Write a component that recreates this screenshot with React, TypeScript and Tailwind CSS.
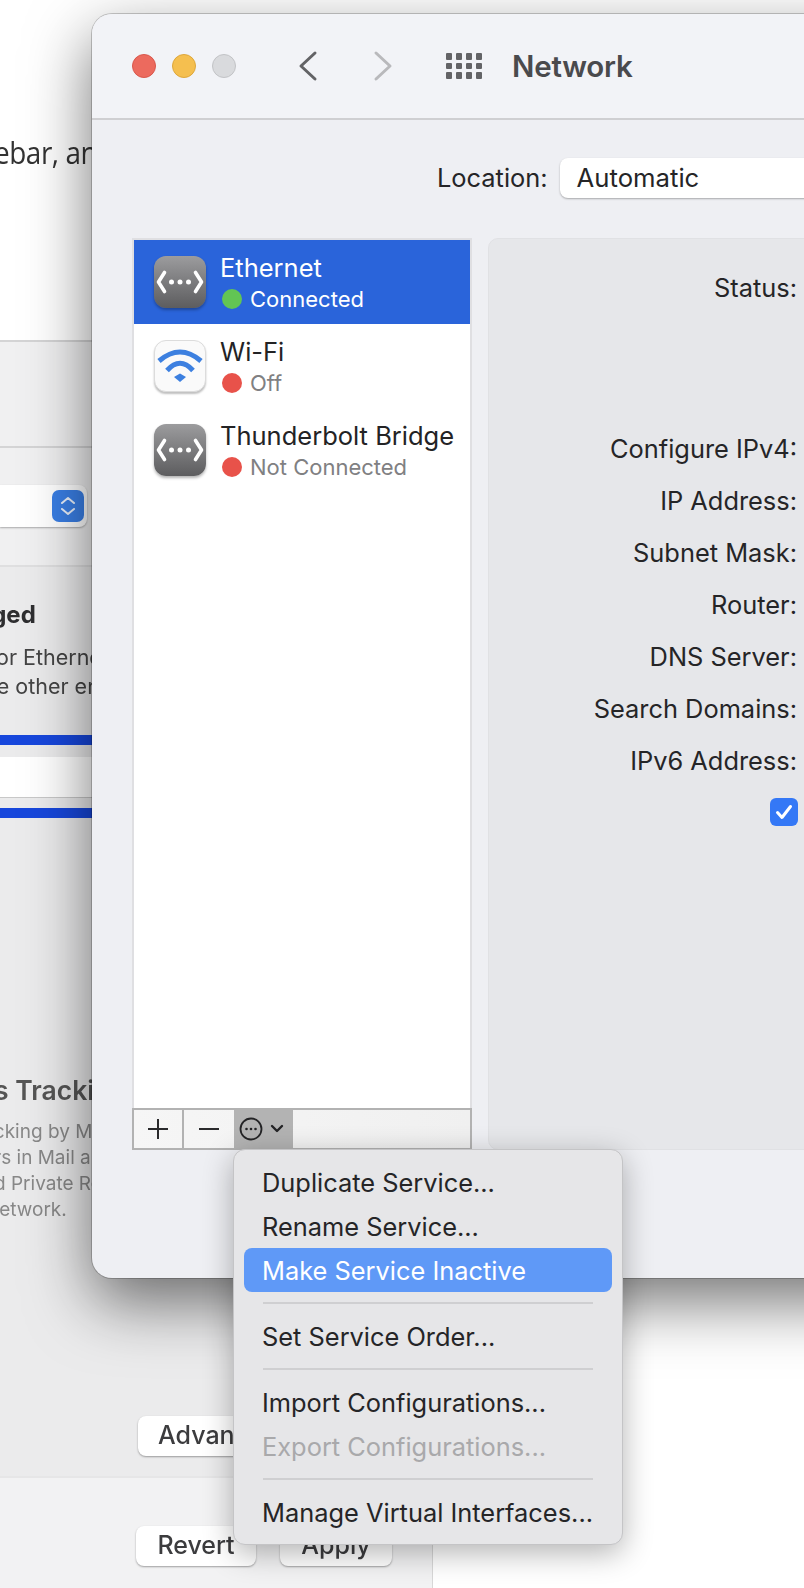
import React from "react";

const EthernetIcon = () => (
  <div className="w-[52px] h-[52px] shrink-0 rounded-[12px] bg-linear-to-b from-[#9c9c9e] to-[#5d5d5f] shadow-[0_2px_3px_rgba(0,0,0,0.3)]">
    <svg width="52" height="52" viewBox="0 0 52 52" fill="none">
      <path d="M10.5 16.5 L4.5 26 L10.5 35.5 M41.5 16.5 L47.5 26 L41.5 35.5" stroke="#fff" strokeWidth="3.6" strokeLinecap="round" strokeLinejoin="round" />
      <circle cx="17.5" cy="26" r="2.5" fill="#fff" />
      <circle cx="26" cy="26" r="2.5" fill="#fff" />
      <circle cx="34.5" cy="26" r="2.5" fill="#fff" />
    </svg>
  </div>
);

const WifiIcon = () => (
  <div className="w-[52px] h-[52px] shrink-0 rounded-[12px] bg-[#fafafa] border border-[#dcdcdc] shadow-[0_2px_2px_rgba(0,0,0,0.25)]">
    <svg width="50" height="50" viewBox="1 1 50 50" fill="none">
      <path d="M5 21 Q26 3 47 21" stroke="#3d80e0" strokeWidth="5" />
      <path d="M13 30.5 Q26 16 39 30.5" stroke="#3d80e0" strokeWidth="5" />
      <path d="M20 37 L26 33.5 L32 37 L26 42 Z" fill="#3d80e0" />
    </svg>
  </div>
);

const services = [
  { name: "Ethernet", status: "Connected", dot: "bg-[#62c554]", active: true, icon: <EthernetIcon /> },
  { name: "Wi-Fi", status: "Off", dot: "bg-[#e8524a]", active: false, icon: <WifiIcon /> },
  { name: "Thunderbolt Bridge", status: "Not Connected", dot: "bg-[#e8524a]", active: false, icon: <EthernetIcon /> },
];

const ServiceRow = ({ name, status, dot, active, icon }: (typeof services)[number]) => (
  <div className={`h-[84px] flex items-center pl-[20px] ${active ? "bg-[#2a64da]" : "bg-white"}`}>
    {icon}
    <div className="ml-[14px] flex flex-col">
      <div className={`h-[30px] mt-[4px] leading-[30px] text-[25.5px] whitespace-nowrap ${active ? "text-white" : "text-[#232325]"}`}>{name}</div>
      <div className="h-[32px] flex items-center">
        <span className={`ml-[2px] w-[20px] h-[20px] rounded-full ${dot}`} />
        <span className={`ml-[8px] text-[22px] leading-[30px] whitespace-nowrap ${active ? "text-white" : "text-[#808082]"}`}>{status}</span>
      </div>
    </div>
  </div>
);

const labels = ["Configure IPv4:", "IP Address:", "Subnet Mask:", "Router:", "DNS Server:", "Search Domains:", "IPv6 Address:"];

const MenuItem = ({ label, active, disabled }: { label: string; active?: boolean; disabled?: boolean }) => (
  <div
    className={`h-[44px] mx-[10px] pl-[18px] pt-[2px] flex items-center rounded-[8px] text-[25.4px] whitespace-nowrap ${
      active ? "bg-[#5f99f7] text-white" : disabled ? "text-[#a9a9ab]" : "text-[#252527]"
    }`}
  >
    {label}
  </div>
);

const MenuSep = () => <div className="h-[2px] mx-[29px] my-[10px] bg-[#cfcfd1]" />;

const BackButton = ({ label, className }: { label: string; className: string }) => (
  <div className={`h-[40px] rounded-[8px] bg-white shadow-[0_1px_2px_rgba(0,0,0,0.35)] flex items-center justify-center text-[25px] font-medium text-[#3c3c3e] ${className}`}>
    {label}
  </div>
);

export default function App() {
  return (
    <div className="relative w-[804px] h-[1588px] overflow-hidden bg-white flex flex-col font-['Inter','Liberation_Sans',sans-serif]">
      {/* desktop behind: blurred system preferences window */}
      <div className="h-[340px] shrink-0 overflow-hidden blur-[0.5px]">
        <div className="mt-[132px] -ml-[6px] text-[31px] leading-[40px] text-[#333] whitespace-nowrap font-['Open_Sans',sans-serif] tracking-[-0.5px] scale-x-[0.9] origin-left">
          ebar, and
        </div>
      </div>
      <div className="flex-1 w-[433px] flex flex-col bg-[#efeff0] border-r border-[#d8d8d8] border-t-2 border-t-[#d4d4d5] overflow-hidden">
        <div className="h-[106px] shrink-0 border-b-2 border-[#d4d4d5] bg-[#f0f0f1]" />
        <div className="h-[119px] shrink-0 border-b-2 border-[#dfdfe0] bg-[#f0f0f1] pt-[37px]">
          <div className="w-[87px] h-[42px] rounded-r-[8px] bg-white shadow-[0_1px_2px_rgba(0,0,0,0.3)] flex items-center justify-end pr-[3px] blur-[0.4px]">
            <div className="w-[32px] h-[32px] rounded-[7px] bg-[#3a7fe6] flex items-center justify-center">
              <svg width="18" height="24" viewBox="0 0 18 24" fill="none">
                <path d="M3 9 L9 4 L15 9 M3 15 L9 20 L15 15" stroke="#fff" strokeWidth="2" strokeLinecap="round" strokeLinejoin="round" opacity="0.9" />
              </svg>
            </div>
          </div>
        </div>
        <div className="h-[911px] shrink-0 flex flex-col border-b-2 border-[#e6e6e7] bg-[#ebebec] overflow-hidden blur-[0.6px]">
          <div className="mt-[32px] -ml-[74px] h-[32px] leading-[32px] text-[24px] font-bold text-[#2e2e30] whitespace-nowrap">Managed</div>
          <div className="mt-[12px] -ml-[4px] h-[29px] leading-[29px] text-[21.5px] text-[#444] whitespace-nowrap">or Ethernet connections and</div>
          <div className="-ml-[16px] h-[29px] leading-[29px] text-[21.5px] text-[#444] whitespace-nowrap">ne other end of the cable</div>
          <div className="mt-[34px] h-[10px] bg-[#1747dc]" />
          <div className="mt-[12px] h-[41px] bg-white border-b border-[#c8c8c8]" />
          <div className="mt-[10px] h-[10px] bg-[#1747dc]" />
          <div className="mt-[257px] -ml-[6px] h-[30px] leading-[30px] text-[26.5px] font-semibold text-[#555] whitespace-nowrap">s Tracking</div>
          <div className="mt-[14px] -ml-[24px] h-[26px] leading-[26px] text-[19px] text-[#888] whitespace-nowrap">racking by Mail</div>
          <div className="-ml-[6px] h-[26px] leading-[26px] text-[19px] text-[#888] whitespace-nowrap">rs in Mail and</div>
          <div className="-ml-[6px] h-[26px] leading-[26px] text-[19px] text-[#888] whitespace-nowrap">d Private Relay</div>
          <div className="-ml-[12px] h-[26px] leading-[26px] text-[19px] text-[#888] whitespace-nowrap">network.</div>
          <div className="mt-[193px] ml-[138px]">
            <BackButton label="Advanced..." className="w-[184px]" />
          </div>
        </div>
        <div className="flex-1 bg-[#f2f2f3] pt-[48px] pl-[136px] flex gap-[24px] blur-[0.6px]">
          <BackButton label="Revert" className="w-[120px]" />
          <BackButton label="Apply" className="w-[112px]" />
        </div>
      </div>

      {/* Network preferences window */}
      <div className="absolute left-[92px] top-[14px] w-[900px] h-[1264px] rounded-[20px] bg-[#eeeff3] shadow-[0_0_0_1px_rgba(0,0,0,0.2),0_24px_64px_rgba(0,0,0,0.55)] overflow-hidden flex flex-col">
        <div className="h-[106px] shrink-0 bg-[#f2f3f7] border-b-2 border-[#cfcfd2] flex items-center pl-[40px]">
          <span className="w-[24px] h-[24px] rounded-full bg-[#ec6a5e] border border-[#d9574c]" />
          <span className="ml-[16px] w-[24px] h-[24px] rounded-full bg-[#f5bf4f] border border-[#dea73b]" />
          <span className="ml-[16px] w-[24px] h-[24px] rounded-full bg-[#d9dadd] border border-[#c2c3c6]" />
          <svg className="ml-[62px]" width="20" height="32" viewBox="0 0 20 32" fill="none">
            <path d="M17 3 L3 16 L17 29" stroke="#636366" strokeWidth="3" strokeLinecap="round" strokeLinejoin="round" />
          </svg>
          <svg className="ml-[55px]" width="20" height="32" viewBox="0 0 20 32" fill="none">
            <path d="M3 3 L17 16 L3 29" stroke="#b9b9bc" strokeWidth="3" strokeLinecap="round" strokeLinejoin="round" />
          </svg>
          <div className="ml-[53px] w-[36px] grid grid-cols-4 gap-x-[4px] gap-y-[3px]">
            {Array.from({ length: 12 }).map((_, i) => (
              <span key={i} className="w-[6px] h-[6.5px] rounded-[1px] bg-[#636366]" />
            ))}
          </div>
          <span className="ml-[30px] text-[29.5px] font-semibold text-[#4a4a4d] tracking-[-0.2px]">Network</span>
        </div>
        <div className="mt-[38px] h-[40px] shrink-0 flex items-center pl-[345px]">
          <span className="text-[25.4px] text-[#252527] whitespace-nowrap">Location:</span>
          <div className="ml-[12px] w-[400px] h-[40px] rounded-[8px] bg-white shadow-[0_1px_2px_rgba(0,0,0,0.3)] pl-[17px] flex items-center text-[25.7px] text-[#252527]">
            Automatic
          </div>
        </div>
        <div className="mt-[40px] flex pl-[40px]">
          <div className="w-[340px] h-[912px] flex flex-col border-2 border-b-0 border-[#dfdfe2] bg-white">
            {services.map((s) => (
              <ServiceRow key={s.name} {...s} />
            ))}
            <div className="flex-1" />
            <div className="-mx-[2px] h-[42px] flex border-2 border-[#b2b2b2] bg-linear-to-r from-[#f6f6f6] to-[#f0f0f0]">
              <div className="w-[50px] flex items-center justify-center border-r-2 border-[#b2b2b2]">
                <svg width="22" height="22" viewBox="0 0 22 22" fill="none">
                  <path d="M11 1 V21 M1 11 H21" stroke="#2a2a2c" strokeWidth="2" />
                </svg>
              </div>
              <div className="w-[50px] flex items-center justify-center">
                <svg width="22" height="22" viewBox="0 0 22 22" fill="none">
                  <path d="M1 11 H21" stroke="#2a2a2c" strokeWidth="2" />
                </svg>
              </div>
              <div className="w-[59px] bg-[#b3b3b3] flex items-center pl-[5px] gap-[7px]">
                <svg width="24" height="24" viewBox="0 0 24 24" fill="none">
                  <circle cx="12" cy="12" r="10.5" stroke="#242426" strokeWidth="1.8" />
                  <circle cx="7.5" cy="12" r="1.3" fill="#242426" />
                  <circle cx="12" cy="12" r="1.3" fill="#242426" />
                  <circle cx="16.5" cy="12" r="1.3" fill="#242426" />
                </svg>
                <svg width="14" height="10" viewBox="0 0 14 10" fill="none">
                  <path d="M2 2 L7 7 L12 2" stroke="#242426" strokeWidth="2.4" strokeLinecap="round" strokeLinejoin="round" />
                </svg>
              </div>
            </div>
          </div>
          <div className="ml-[16px] w-[400px] h-[912px] rounded-[10px] bg-[#e6e7ea] border border-[#e0e1e4] flex flex-col">
            <div className="mt-[23px] w-[308px] h-[52px] flex items-center justify-end text-[25.4px] text-[#252527]">Status:</div>
            <div className="mt-[109px] flex flex-col">
              {labels.map((label) => (
                <div key={label} className="w-[308px] h-[52px] flex items-center justify-end text-[25.4px] text-[#252527] whitespace-nowrap">
                  {label}
                </div>
              ))}
              <div className="-mt-[1px] w-[309px] h-[52px] flex items-center justify-end">
                <div className="w-[28px] h-[28px] rounded-[6px] bg-[#3478f6] flex items-center justify-center">
                  <svg width="20" height="20" viewBox="0 0 20 20" fill="none">
                    <path d="M3.5 10.5 L8 15.5 L16.5 4.5" stroke="#fff" strokeWidth="3" strokeLinecap="round" strokeLinejoin="round" />
                  </svg>
                </div>
              </div>
            </div>
          </div>
        </div>
      </div>

      {/* action menu */}
      <div className="absolute left-[233px] top-[1149px] w-[390px] h-[396px] pt-[10px] rounded-[12px] bg-[#e6e6e8] border border-[#c4c4c6] shadow-[0_8px_30px_rgba(0,0,0,0.3)] flex flex-col">
        <MenuItem label="Duplicate Service..." />
        <MenuItem label="Rename Service..." />
        <MenuItem label="Make Service Inactive" active />
        <MenuSep />
        <MenuItem label="Set Service Order..." />
        <MenuSep />
        <MenuItem label="Import Configurations..." />
        <MenuItem label="Export Configurations..." disabled />
        <MenuSep />
        <MenuItem label="Manage Virtual Interfaces..." />
      </div>
    </div>
  );
}
